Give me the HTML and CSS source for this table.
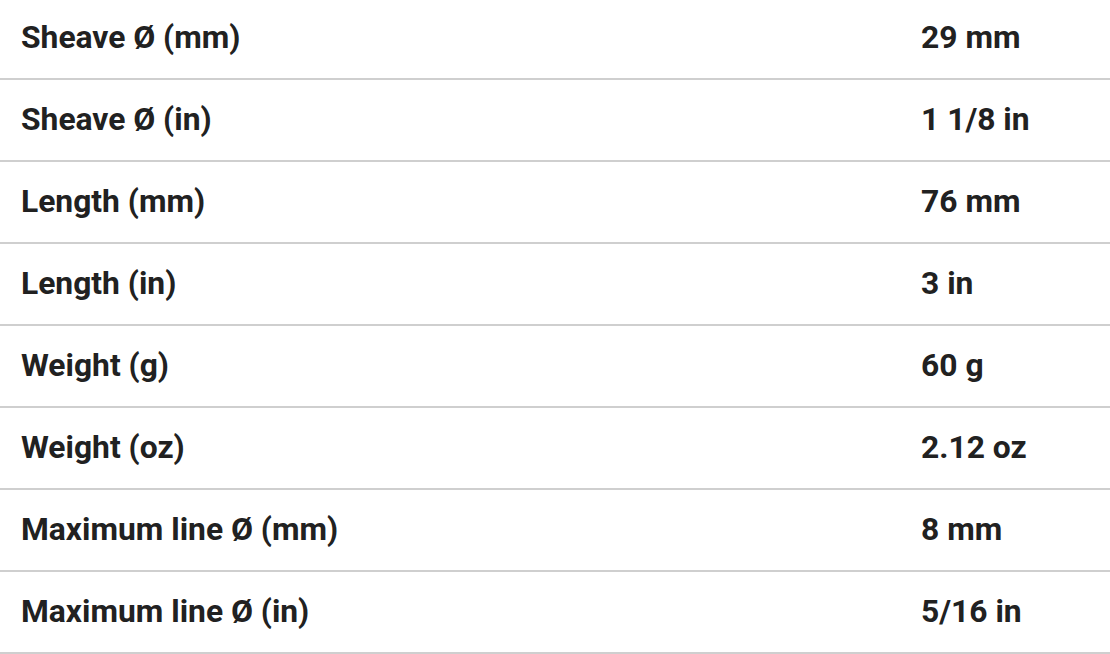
FILE: index.html
```html
<!DOCTYPE html>
<html>
<head>
<meta charset="utf-8">
<link rel="stylesheet" href="styles.css">
</head>
<body>
<div class="specs">
  <div class="row"><div class="label">Sheave Ø (mm)</div><div class="value">29 mm</div></div>
  <div class="row"><div class="label">Sheave Ø (in)</div><div class="value">1 1/8 in</div></div>
  <div class="row"><div class="label">Length (mm)</div><div class="value">76 mm</div></div>
  <div class="row"><div class="label">Length (in)</div><div class="value">3 in</div></div>
  <div class="row"><div class="label">Weight (g)</div><div class="value">60 g</div></div>
  <div class="row"><div class="label">Weight (oz)</div><div class="value">2.12 oz</div></div>
  <div class="row"><div class="label">Maximum line Ø (mm)</div><div class="value">8 mm</div></div>
  <div class="row"><div class="label">Maximum line Ø (in)</div><div class="value">5/16 in</div></div>
</div>
</body>
</html>
```
FILE: styles.css
```css
html, body {
  margin: 0;
  padding: 0;
  background: #fff;
}
body {
  font-family: Roboto, "Liberation Sans", sans-serif;
  color: #212121;
  overflow: hidden;
}
.specs {
  margin-top: -2px;
}
.row {
  display: grid;
  grid-template-columns: 900px 1fr;
  height: 80px;
  box-sizing: content-box;
  align-items: center;
  border-bottom: 2px solid #cfcfcf;
  font-size: 31.8px;
  font-weight: 700;
  padding-bottom: 0;
}
.label, .value {
  padding-left: 21px;
  padding-bottom: 3px;
}
```
